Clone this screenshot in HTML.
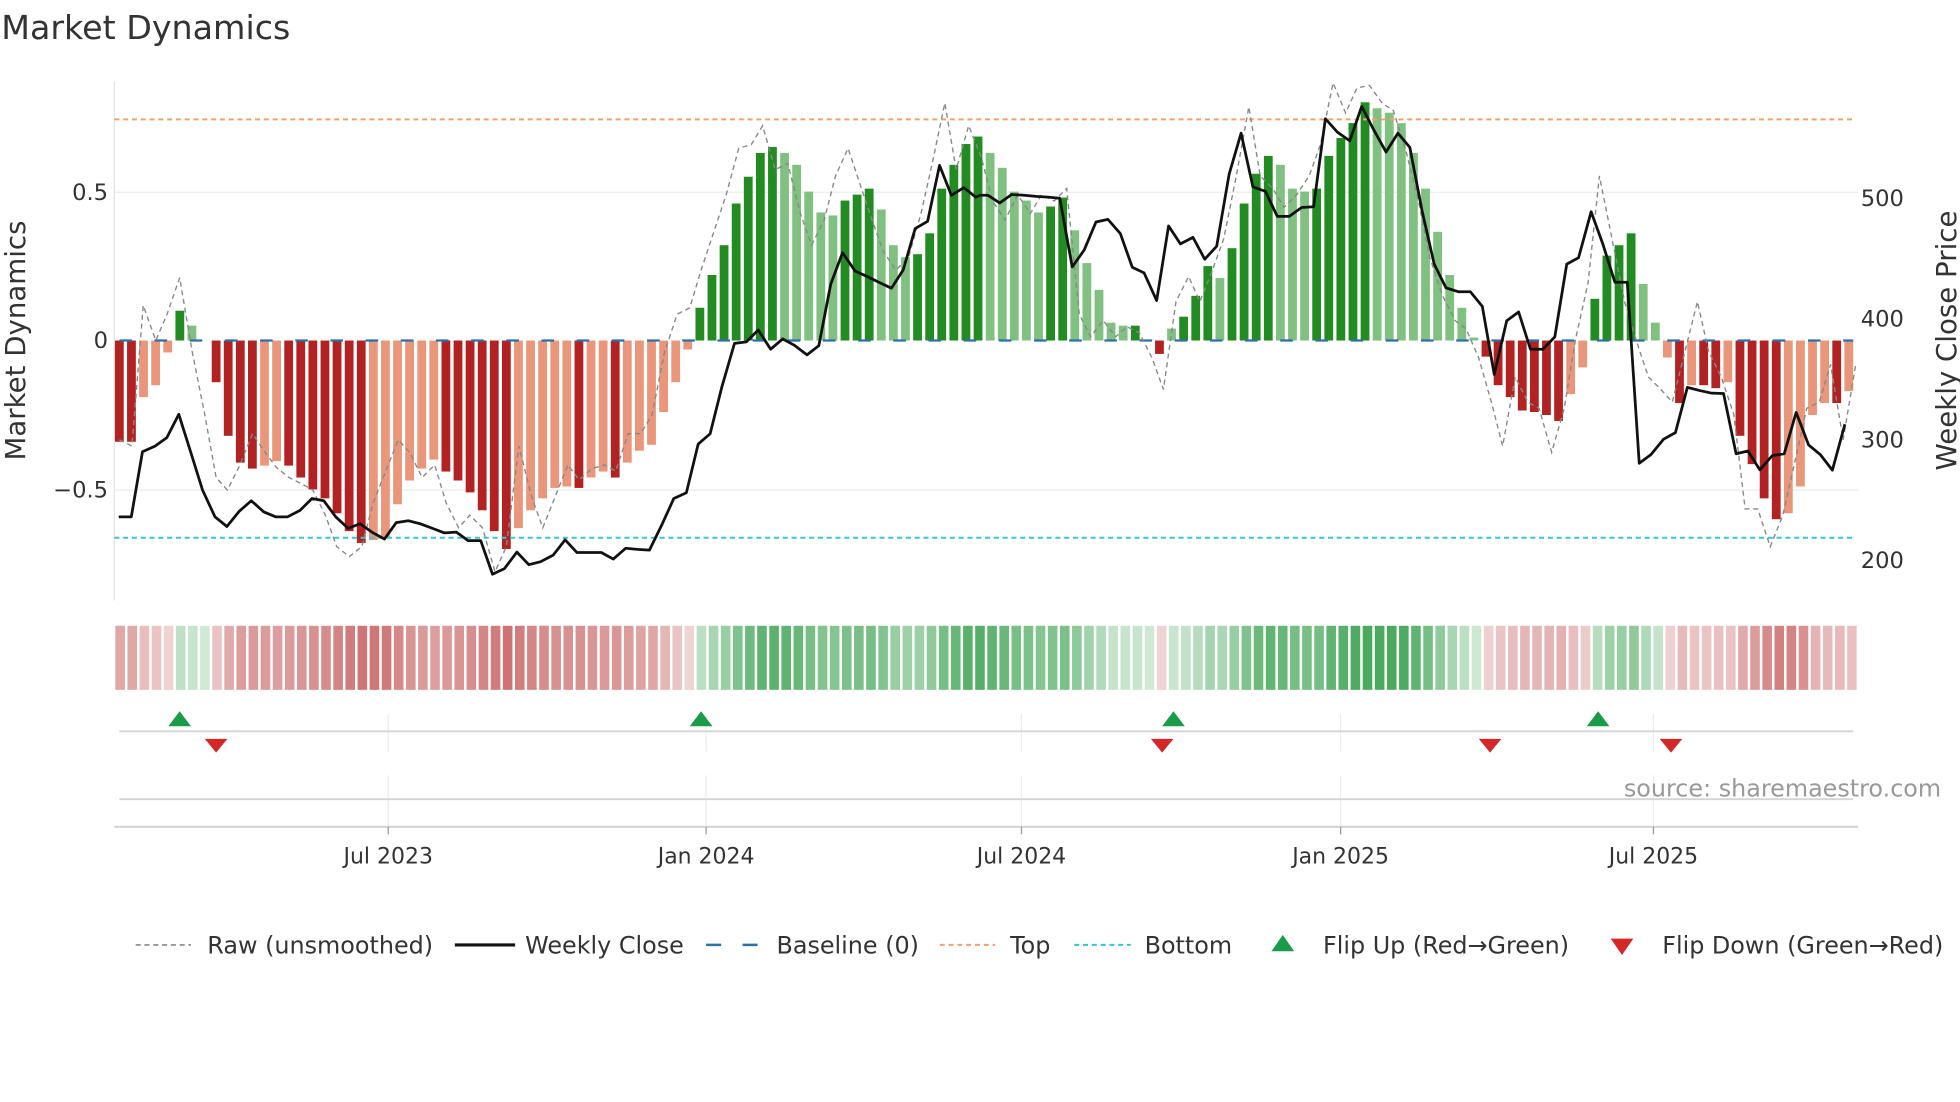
<!DOCTYPE html>
<html><head><meta charset="utf-8">
<style>
html,body{margin:0;padding:0;background:#fff;width:1960px;height:1102px;overflow:hidden}
svg{display:block}
text{font-family:"DejaVu Sans","Liberation Sans",sans-serif;fill:#333}
</style></head>
<body>
<svg id="s" width="1960" height="1102" viewBox="0 0 1560 877" preserveAspectRatio="none" xmlns="http://www.w3.org/2000/svg">
<rect width="1560" height="877" fill="#fff"/>
<text x="1" y="31" font-size="26.5" fill="#333">Market Dynamics</text>
<line x1="91" y1="153" x2="1479" y2="153" stroke="#ebebeb" stroke-width="1"/>
<line x1="91" y1="390" x2="1479" y2="390" stroke="#ebebeb" stroke-width="1"/>
<line x1="91" y1="65" x2="91" y2="478" stroke="#e4e4e4" stroke-width="1"/>
<g id="bars"></g>
<line x1="91" y1="95" x2="1475" y2="95" stroke="#eea36e" stroke-width="1.6" stroke-dasharray="4,3"/>
<line x1="91" y1="428" x2="1475" y2="428" stroke="#35c6d6" stroke-width="1.6" stroke-dasharray="4,3"/>
<line x1="95" y1="271" x2="1475" y2="271" stroke="#2f6fa8" stroke-width="1.8" stroke-dasharray="10,18"/>
<polyline id="raw" fill="none" stroke="#888" stroke-width="1.1" stroke-dasharray="4,3"/>
<polyline id="close" fill="none" stroke="#111" stroke-width="2.2" stroke-linejoin="round"/>
<g font-size="18" text-anchor="end">
<text x="86" y="159">0.5</text>
<text x="86" y="277">0</text>
<text x="86" y="396">−0.5</text>
</g>
<g font-size="18">
<text x="1481" y="164">500</text>
<text x="1481" y="260">400</text>
<text x="1481" y="356">300</text>
<text x="1481" y="452">200</text>
</g>
<text transform="translate(20,271) rotate(-90)" font-size="22" text-anchor="middle">Market Dynamics</text>
<text transform="translate(1557,271) rotate(-90)" font-size="22" text-anchor="middle">Weekly Close Price</text>
<g id="heat"></g>
<g stroke="#ececec" stroke-width="1">
<line x1="309" y1="568" x2="309" y2="598"/><line x1="562" y1="568" x2="562" y2="598"/><line x1="813" y1="568" x2="813" y2="598"/><line x1="1067" y1="568" x2="1067" y2="598"/><line x1="1316" y1="568" x2="1316" y2="598"/>
<line x1="309" y1="617" x2="309" y2="658"/><line x1="562" y1="617" x2="562" y2="658"/><line x1="813" y1="617" x2="813" y2="658"/><line x1="1067" y1="617" x2="1067" y2="658"/><line x1="1316" y1="617" x2="1316" y2="658"/>
</g>
<line x1="95" y1="582" x2="1475" y2="582" stroke="#d4d4d4" stroke-width="1.5"/>
<line x1="95" y1="636" x2="1475" y2="636" stroke="#d4d4d4" stroke-width="1.5"/>
<line x1="91" y1="658" x2="1479" y2="658" stroke="#cfcfcf" stroke-width="1.5"/>
<g stroke="#999" stroke-width="1">
<line x1="309" y1="658" x2="309" y2="664"/><line x1="562" y1="658" x2="562" y2="664"/><line x1="813" y1="658" x2="813" y2="664"/><line x1="1067" y1="658" x2="1067" y2="664"/><line x1="1316" y1="658" x2="1316" y2="664"/>
</g>
<g id="tri"></g>
<g font-size="17.5" text-anchor="middle">
<text x="309" y="687">Jul 2023</text><text x="562" y="687">Jan 2024</text><text x="813" y="687">Jul 2024</text><text x="1067" y="687">Jan 2025</text><text x="1316" y="687">Jul 2025</text>
</g>
<text x="1545" y="634" font-size="19" text-anchor="end" style="fill:#999">source: sharemaestro.com</text>
<g font-size="19">
<line x1="108" y1="752" x2="152" y2="752" stroke="#888" stroke-width="1.3" stroke-dasharray="4,3"/>
<text x="165" y="759">Raw (unsmoothed)</text>
<line x1="362" y1="752" x2="410" y2="752" stroke="#111" stroke-width="2.5"/>
<text x="418" y="759">Weekly Close</text>
<line x1="562" y1="752" x2="606" y2="752" stroke="#2f6fa8" stroke-width="2" stroke-dasharray="12,17"/>
<text x="618" y="759">Baseline (0)</text>
<line x1="748" y1="752" x2="792" y2="752" stroke="#eea36e" stroke-width="1.6" stroke-dasharray="4,3"/>
<text x="804" y="759">Top</text>
<line x1="855" y1="752" x2="900" y2="752" stroke="#35c6d6" stroke-width="1.6" stroke-dasharray="4,3"/>
<text x="911" y="759">Bottom</text>
<polygon points="1012,757 1030,757 1021,744" fill="#1a9b48"/>
<text x="1053" y="759">Flip Up (Red→Green)</text>
<polygon points="1282,747 1300,747 1291,760" fill="#d62728"/>
<text x="1323" y="759">Flip Down (Green→Red)</text>
</g>
</svg>
<script>
var NS="http://www.w3.org/2000/svg";
function el(t,a,p){var e=document.createElementNS(NS,t);for(var k in a)e.setAttribute(k,a[k]);p.appendChild(e);return e;}
var V=[-0.34,-0.34,-0.19,-0.15,-0.04,0.10,0.05,0,-0.14,-0.32,
-0.41,-0.43,-0.42,-0.405,-0.42,-0.46,-0.50,-0.53,-0.58,-0.64,
-0.68,-0.67,-0.66,-0.55,-0.47,-0.43,-0.40,-0.44,-0.47,-0.51,
-0.57,-0.64,-0.70,-0.63,-0.57,-0.53,-0.495,-0.49,-0.495,-0.46,
-0.44,-0.46,-0.41,-0.37,-0.35,-0.24,-0.14,-0.03,0.11,0.22,
0.32,0.46,0.55,0.63,0.65,0.63,0.59,0.50,0.43,0.42,
0.47,0.49,0.51,0.44,0.32,0.28,0.29,0.36,0.51,0.59,0.66,0.685,
0.63,0.58,0.50,0.47,0.43,0.45,0.48,0.37,0.26,0.17,0.06,0.05,0.05,0,
-0.045,0.04,0.08,0.15,0.25,0.21,0.31,0.46,0.56,0.62,0.59,0.51,0.50,0.51,
0.62,0.68,0.73,0.80,0.78,0.765,0.73,0.63,0.51,0.365,0.22,0.11,0.01,
-0.054,-0.15,-0.19,-0.235,-0.24,-0.25,-0.27,-0.18,-0.09,
0.14,0.285,0.32,0.36,0.19,0.06,
-0.057,-0.21,-0.15,-0.15,-0.16,-0.14,-0.32,-0.415,-0.53,-0.60,-0.58,-0.49,-0.25,-0.21,-0.21,-0.17];
var n=V.length,x0=95,dx=(1471.5-95)/(n-1),bw=7;
var bars=document.getElementById('bars'),heat=document.getElementById('heat');
for(var i=0;i<n;i++){
 var v=V[i],x=x0+i*dx,prev=i?V[i-1]:0;
 var dark=Math.abs(v)>=Math.abs(prev);
 var c=v>=0?(dark?'#228b22':'#80c080'):(dark?'#b22222':'#e9967a');
 var y=271-v*237;
 if(v!==0) el('rect',{x:x-bw/2,y:Math.min(y,271),width:bw,height:Math.abs(y-271),fill:c},bars);
 var t=Math.min(1,Math.abs(v)/0.75),a=0.25+0.7*t;
 var base=v>=0?[65,165,85]:[200,100,100];
 var col='rgb('+base.map(function(b){return Math.round(255+(b-255)*a)}).join(',')+')';
 el('rect',{x:91+i*(1388/n)+0.8,y:498,width:1388/n-2,height:51,fill:col},heat);
}
function pts(A,off){var s=[];for(var i=0;i<A.length;i+=2){s.push((off+A[i]/2.01).toFixed(1)+','+(A[i+1]/3.282).toFixed(1));}return s;}
var c1=[190,1350,210,1350,228,1180,248,1165,267,1143,286,1082,305,1180,324,1280,344,1350,363,1375,383,1335,402,1308,422,1337,441,1350,460,1350,480,1333,499,1302,518,1308,537,1350,557,1380,576,1368,595,1390,615,1408,634,1365,653,1360,672,1368,692,1380,711,1392,730,1390,749,1412,769,1412,788,1500,807,1485,827,1442,846,1475,865,1467,885,1450,904,1410,923,1443,943,1443,962,1443,981,1460,1001,1432,1020,1435,1039,1437,1059,1370,1078,1302,1098,1287,1117,1160,1136,1133,1155,1010,1175,897,1194,893,1213,862,1233,912,1252,885,1271,902,1291,927,1310,903,1329,742,1348,660,1368,708,1387,722,1406,737,1426,753,1445,705,1464,597,1484,578,1503,432,1522,510,1542,490,1561,515];
var c2=[0,510,12,510,31,530,50,508,70,510,89,513,108,515,127,518,147,697,166,653,185,580,204,573,224,610,243,698,262,713,282,785,301,590,320,637,340,620,359,677,378,643,398,455,417,348,436,488,456,500,475,565,494,565,514,542,533,540,552,310,571,345,591,368,610,278,629,338,649,397,668,348,687,385,707,553,726,690,745,752,765,762,784,762,803,800,822,978,842,838,861,815,880,912,900,912,919,880,938,690,957,673,977,553,996,638,1015,737,1035,737,1054,1210,1073,1187,1093,1147,1112,1130,1131,1012,1151,1020,1170,1027,1189,1028,1209,1185,1228,1178,1247,1227,1267,1190,1286,1185,1305,1077,1325,1162,1344,1188,1363,1228,1383,1108];
document.getElementById('close').setAttribute('points',pts(c1,0).concat(pts(c2,780.3)).join(' '));
var raw=[95,350,105,355,114,243,124,271,133,250,143,221,153,280,163,330,172,380,181,390,191,370,201,345,211,360,220,372,230,380,240,385,249,390,259,410,268,435,278,443,288,435,297,400,307,375,317,350,326,360,336,380,346,370,355,400,365,420,374,410,384,420,394,455,403,435,413,355,423,395,432,420,442,395,452,370,461,382,471,373,481,370,490,375,500,345,510,345,519,330,529,280,539,250,549,245,558,215,568,185,578,155,588,118,598,115,607,100,617,135,627,130,637,170,646,195,656,175,665,140,675,118,684,145,694,175,703,200,713,215,723,205,733,170,742,130,752,82,761,135,771,100,781,125,790,160,800,175,810,155,820,170,829,155,839,160,849,150,859,250,868,268,878,255,888,268,897,260,907,265,917,285,926,310,936,240,946,220,955,240,965,215,974,190,984,140,994,85,1003,140,1013,150,1022,165,1032,155,1042,140,1051,115,1061,66,1071,90,1080,70,1090,68,1100,82,1109,88,1119,120,1129,160,1138,205,1148,235,1158,255,1167,262,1177,285,1187,320,1196,355,1206,300,1216,320,1225,325,1235,360,1245,325,1254,270,1264,225,1273,140,1283,190,1293,240,1302,270,1312,300,1322,310,1331,320,1341,280,1351,240,1360,280,1370,300,1380,330,1389,405,1399,405,1409,435,1419,410,1428,370,1438,325,1448,320,1457,290,1467,350,1477,290];
var rs=[];for(var i=0;i<raw.length;i+=2)rs.push(raw[i]+','+raw[i+1]);
document.getElementById('raw').setAttribute('points',rs.join(' '));
var tri=document.getElementById('tri');
[143,558,934,1272].forEach(function(x){el('polygon',{points:(x-9)+',578 '+(x+9)+',578 '+x+',566',fill:'#1a9b48'},tri);});
[172,925,1186,1330].forEach(function(x){el('polygon',{points:(x-9)+',588 '+(x+9)+',588 '+x+',599',fill:'#d62728'},tri);});
</script>
</body></html>
